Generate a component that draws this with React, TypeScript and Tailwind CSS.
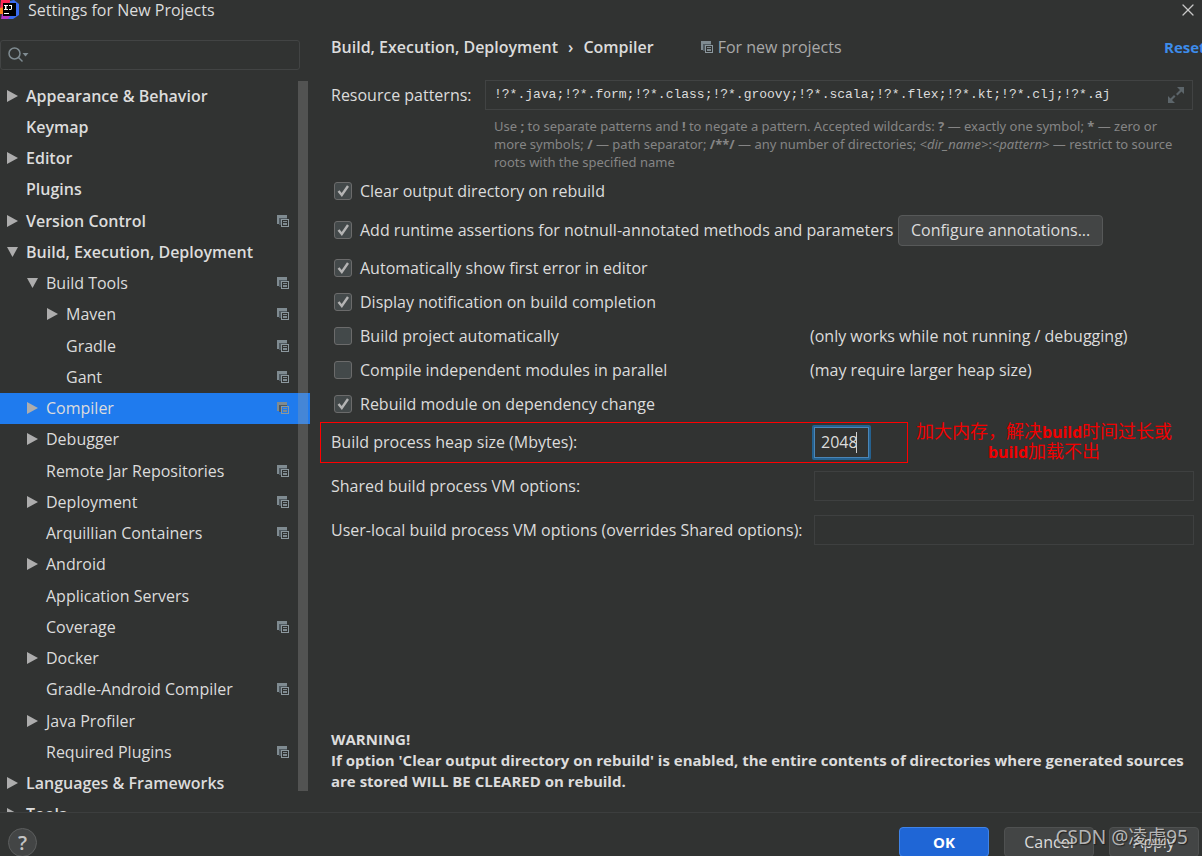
import React, { useState } from 'react';
import { X } from 'lucide-react';
import clsx from 'clsx';

interface TreeItem {
  label: string;
  level: number;
  arrow?: 'open' | 'closed';
  project?: boolean;
}

const treeItems: TreeItem[] = [
  { label: 'Appearance & Behavior', level: 0, arrow: 'closed' },
  { label: 'Keymap', level: 0 },
  { label: 'Editor', level: 0, arrow: 'closed' },
  { label: 'Plugins', level: 0 },
  { label: 'Version Control', level: 0, arrow: 'closed', project: true },
  { label: 'Build, Execution, Deployment', level: 0, arrow: 'open' },
  { label: 'Build Tools', level: 1, arrow: 'open', project: true },
  { label: 'Maven', level: 2, arrow: 'closed', project: true },
  { label: 'Gradle', level: 2, project: true },
  { label: 'Gant', level: 2, project: true },
  { label: 'Compiler', level: 1, arrow: 'closed', project: true },
  { label: 'Debugger', level: 1, arrow: 'closed' },
  { label: 'Remote Jar Repositories', level: 1, project: true },
  { label: 'Deployment', level: 1, arrow: 'closed', project: true },
  { label: 'Arquillian Containers', level: 1, project: true },
  { label: 'Android', level: 1, arrow: 'closed' },
  { label: 'Application Servers', level: 1 },
  { label: 'Coverage', level: 1, project: true },
  { label: 'Docker', level: 1, arrow: 'closed' },
  { label: 'Gradle-Android Compiler', level: 1, project: true },
  { label: 'Java Profiler', level: 1, arrow: 'closed' },
  { label: 'Required Plugins', level: 1, project: true },
  { label: 'Languages & Frameworks', level: 0, arrow: 'closed' },
  { label: 'Tools', level: 0, arrow: 'closed' },
];

const indents = ['pl-[6px]', 'pl-[26px]', 'pl-[46px]'];

const ProjectIcon: React.FC = () => (
  <svg width="12" height="12" viewBox="0 0 12 12" className="shrink-0" aria-hidden="true">
    <path d="M0 0h10v3H2v6H0z" fill="#7f8b91" />
    <path d="M2 3h8v1H4v6H2z" fill="#4f595f" />
    <path d="M4 4h8v8H4zM5 5v6h6V5z" fill="#8c989e" fillRule="evenodd" />
    <path d="M6 6h4v1H6zM6 8h4v1H6zM6 9h4v1H6z" fill="#7f8b91" />
  </svg>
);

const Arrow: React.FC<{ state?: 'open' | 'closed' }> = ({ state }) => (
  <svg width="12" height="12" viewBox="0 0 12 12" className="shrink-0" fill="#adadad" aria-hidden="true">
    {state === 'closed' && <path d="M1 0l11 6-11 6z" />}
    {state === 'open' && <path d="M1 1h11L6.500 11z" />}
  </svg>
);

const Logo: React.FC = () => (
  <svg width="20" height="20" viewBox="0 0 20 20" className="shrink-0" aria-hidden="true">
    <path d="M1 0h9v10H0z" fill="#fe2857" />
    <path d="M0 8l4-1v7H0z" fill="#fc801d" />
    <path d="M10 1l4-1 5 4v11l-6 4H8z" fill="#3a6cf0" />
    <path d="M2 14h10l-4 5H1z" fill="#b436c8" />
    <path d="M3 3h13v13H3z" fill="#000" />
    <path d="M4 5h4v1H6.500v3H8v1H4V9h1V6H4zM9 5h3v4l-1 1H9V9h2V6H9zM4 13h5v1H4z" fill="#fff" />
  </svg>
);

interface CheckProps {
  id: string;
  label: string;
  defaultChecked?: boolean;
  hint?: string;
}

const CheckRow: React.FC<CheckProps> = ({ id, label, defaultChecked, hint }) => (
  <div className="flex h-[34px] items-center">
    <div className="flex w-[479px] shrink-0 items-center whitespace-nowrap">
      <span className="ml-[3px] mr-2 grid h-[18px] w-[18px] shrink-0">
        <input
          id={id}
          type="checkbox"
          defaultChecked={defaultChecked}
          className="peer col-start-1 row-start-1 appearance-none rounded-[3px] border border-[#6b6b6b] bg-[#43494a]"
        />
        <svg
          viewBox="0 0 18 18"
          className="pointer-events-none invisible col-start-1 row-start-1 peer-checked:visible"
          fill="none"
          stroke="#b4b4b4"
          strokeWidth="2.400"
          aria-hidden="true"
        >
          <path d="M4.500 9l3.300 4L14 4" />
        </svg>
      </span>
      <label htmlFor={id}>{label}</label>
    </div>
    {hint && <span className="whitespace-nowrap">{hint}</span>}
  </div>
);

const Sidebar: React.FC = () => {
  const [selected, setSelected] = useState('Compiler');

  return (
    <aside className="flex w-[310px] shrink-0 flex-col">
      <div className="mt-5 mr-[10px] flex h-[30px] items-center rounded-[3px] border border-[#424444] pl-[7px]">
        <svg width="21" height="16" viewBox="0 0 21 16" fill="none" stroke="#7f8b91" strokeWidth="1.500" aria-hidden="true">
          <circle cx="6.500" cy="6.500" r="5.500" />
          <path d="M10.500 10.500l4 4" />
          <path d="M14.500 6h6l-3 3.500z" fill="#7f8b91" stroke="none" />
        </svg>
        <input type="text" aria-label="Search settings" className="min-w-0 flex-1 bg-transparent outline-none" />
      </div>

      <div className="relative mt-[10px] min-h-0 flex-1 overflow-hidden">
        <ul className="flex h-[750px] flex-col">
          {treeItems.map((item) => (
            <li key={item.label} className="flex min-h-0 flex-1">
              <button
                type="button"
                onClick={() => setSelected(item.label)}
                className={clsx(
                  'flex w-full items-center pr-[21px] text-left whitespace-nowrap',
                  indents[item.level],
                  item.level === 0 && 'font-semibold',
                  selected === item.label && 'bg-[#1f7bee]'
                )}
              >
                <Arrow state={item.arrow} />
                <span className="ml-2 flex-1">{item.label}</span>
                {item.project && <ProjectIcon />}
              </button>
            </li>
          ))}
        </ul>
        <div className="absolute top-px right-[2px] bottom-[21px] w-[10px] bg-[#a0a0a0]/30" />
      </div>
    </aside>
  );
};

const CompilerPage: React.FC = () => (
  <main className="flex min-w-0 flex-1 flex-col overflow-hidden pl-[21px]">
    <div className="mt-[14px] flex h-[26px] items-center whitespace-nowrap">
      <h1 className="flex font-semibold">
        <span>Build, Execution, Deployment</span>
        <span className="mx-[10px]">›</span>
        <span>Compiler</span>
      </h1>
      <div className="ml-[47px] flex items-center gap-[5px] text-[#a8a8a8]">
        <ProjectIcon />
        <span>For new projects</span>
      </div>
      <a href="#reset" className="ml-auto w-[38px] text-[15px] font-bold text-[#3d8ceb]">
        Reset
      </a>
    </div>

    <div className="mt-5 mr-[9px] flex items-center">
      <label htmlFor="patterns" className="w-[154px] shrink-0">
        Resource patterns:
      </label>
      <div className="flex h-[30px] min-w-0 flex-1 items-center border border-[#414343] pr-[8px] pl-2">
        <input
          id="patterns"
          type="text"
          defaultValue="!?*.java;!?*.form;!?*.class;!?*.groovy;!?*.scala;!?*.flex;!?*.kt;!?*.clj;!?*.aj"
          className="min-w-0 flex-1 bg-transparent font-['Liberation_Mono',monospace] text-[13px] outline-none"
        />
        <button type="button" aria-label="Expand">
          <svg width="16" height="16" viewBox="0 0 16 16" fill="#5c656a" aria-hidden="true">
            <path d="M9 0h7v7l-2.500-2.500-4 4-1.500-1.500 4-4z" />
            <path d="M0 9l2.500 2.500 3.500-3.500 1.500 1.500-3.500 3.500L7 16H0z" />
          </svg>
        </button>
      </div>
    </div>
    <p className="mt-[7px] mr-[15px] ml-[163px] font-['Noto_Sans',sans-serif] text-[13px] leading-[18px] text-[#858585]">
      Use <b>;</b> to separate patterns and <b>!</b> to negate a pattern. Accepted wildcards: <b>?</b> — exactly one
      symbol; <b>*</b> — zero or more symbols; <b>/</b> — path separator; <b>/**/</b> — any number of directories;{' '}
      <i>&lt;dir_name&gt;</i>:<i>&lt;pattern&gt;</i> — restrict to source roots with the specified name
    </p>

    <div className="mt-[3px]">
      <CheckRow id="clear" label="Clear output directory on rebuild" defaultChecked />
      <div className="mt-[5px] mb-1 flex items-center">
        <CheckRow id="assertions" label="Add runtime assertions for notnull-annotated methods and parameters" defaultChecked />
        <button
          type="button"
          className="ml-[88px] h-[31px] rounded-[4px] border border-[#575959] bg-[#434545] px-3 whitespace-nowrap"
        >
          Configure annotations...
        </button>
      </div>
      <CheckRow id="first-error" label="Automatically show first error in editor" defaultChecked />
      <CheckRow id="notify" label="Display notification on build completion" defaultChecked />
      <CheckRow id="auto" label="Build project automatically" hint="(only works while not running / debugging)" />
      <CheckRow id="parallel" label="Compile independent modules in parallel" hint="(may require larger heap size)" />
      <CheckRow id="dependency" label="Rebuild module on dependency change" defaultChecked />
    </div>

    <div className="mt-px -ml-[11px] flex items-start gap-[6px]">
      <div className="flex h-[41px] w-[588px] shrink-0 items-center border border-[#ff0000] pb-px pl-[10px]">
        <label htmlFor="heap" className="w-[481px] shrink-0">
          Build process heap size (Mbytes):
        </label>
        <div className="flex h-[35px] w-[59px] items-center rounded-[2px] border-2 border-[#25618f] pl-[7px] ring-1 ring-[#4a86b8] ring-inset">
          <input id="heap" type="text" defaultValue="2048" className="w-[36px] bg-transparent outline-none" />
          <span className="-ml-px h-[21px] w-px bg-[#d0d0d0]" />
        </div>
      </div>
      <p className="w-[260px] shrink-0 text-center font-['Noto_Sans','Noto_Sans_CJK_SC',sans-serif] text-[18px] leading-[19px] whitespace-nowrap text-[#f00000]">
        加大内存，解决<b className="text-[16px]">build</b>时间过长或
        <br />
        <b className="text-[16px]">build</b>加载不出
      </p>
    </div>

    <div className="mt-2 mr-[8px] flex items-center">
      <label htmlFor="shared-vm" className="w-[483px] shrink-0">
        Shared build process VM options:
      </label>
      <input id="shared-vm" type="text" className="h-[30px] min-w-0 flex-1 border border-[#3e4040] bg-transparent px-2" />
    </div>
    <div className="mt-[14px] mr-[8px] flex items-center">
      <label htmlFor="local-vm" className="w-[483px] shrink-0 whitespace-nowrap">
        User-local build process VM options (overrides Shared options):
      </label>
      <input id="local-vm" type="text" className="h-[30px] min-w-0 flex-1 border border-[#3e4040] bg-transparent px-2" />
    </div>

    <div className="mt-auto mr-[9px] mb-5 text-[15px] leading-[21px] font-bold">
      <p>WARNING!</p>
      <p>
        If option 'Clear output directory on rebuild' is enabled, the entire contents of directories where generated
        sources are stored WILL BE CLEARED on rebuild.
      </p>
    </div>
  </main>
);

export default function App() {
  return (
    <div className="relative flex h-screen flex-col overflow-hidden bg-[#313332] font-['Open_Sans','Noto_Sans_CJK_SC',sans-serif] text-[16px] leading-[22px] text-[#dcdcdc]">
      <header className="flex h-5 shrink-0 items-center pr-[4px]">
        <Logo />
        <span className="ml-2 flex-1">Settings for New Projects</span>
        <button type="button" aria-label="Close">
          <X className="h-[20px] w-[20px] text-[#c8c8c8]" strokeWidth={1.5} />
        </button>
      </header>

      <div className="flex min-h-0 flex-1">
        <Sidebar />
        <CompilerPage />
      </div>

      <footer className="flex h-[44px] shrink-0 items-start gap-[15px] border-t border-[#3c3e3e] pt-[14px] pr-[3px] pl-2">
        <button
          type="button"
          aria-label="Help"
          className="mt-px mr-auto h-[29px] w-[29px] shrink-0 rounded-full border border-[#5c5e5e] bg-[#434545] text-[20px] font-semibold text-[#c4c4c4]"
        >
          ?
        </button>
        <button
          type="button"
          className="h-[30px] w-[90px] shrink-0 rounded-[4px] border border-[#3f83e8] bg-[#1f66d6] text-[15px] font-bold text-white"
        >
          OK
        </button>
        <button type="button" className="h-[30px] w-[90px] shrink-0 rounded-[4px] border border-[#4f5151] bg-[#434545]">
          Cancel
        </button>
        <button type="button" className="h-[30px] w-[90px] shrink-0 rounded-[4px] border border-[#4f5151] bg-[#434545]">
          Apply
        </button>
      </footer>

      <span className="pointer-events-none absolute right-[14px] bottom-[6px] font-['Noto_Sans','Noto_Sans_CJK_SC',sans-serif] text-[19px] leading-[26px] text-[#d8d8d8]/80 [text-shadow:1px_1px_1px_#222]">
        CSDN @凌虚95
      </span>
    </div>
  );
}
